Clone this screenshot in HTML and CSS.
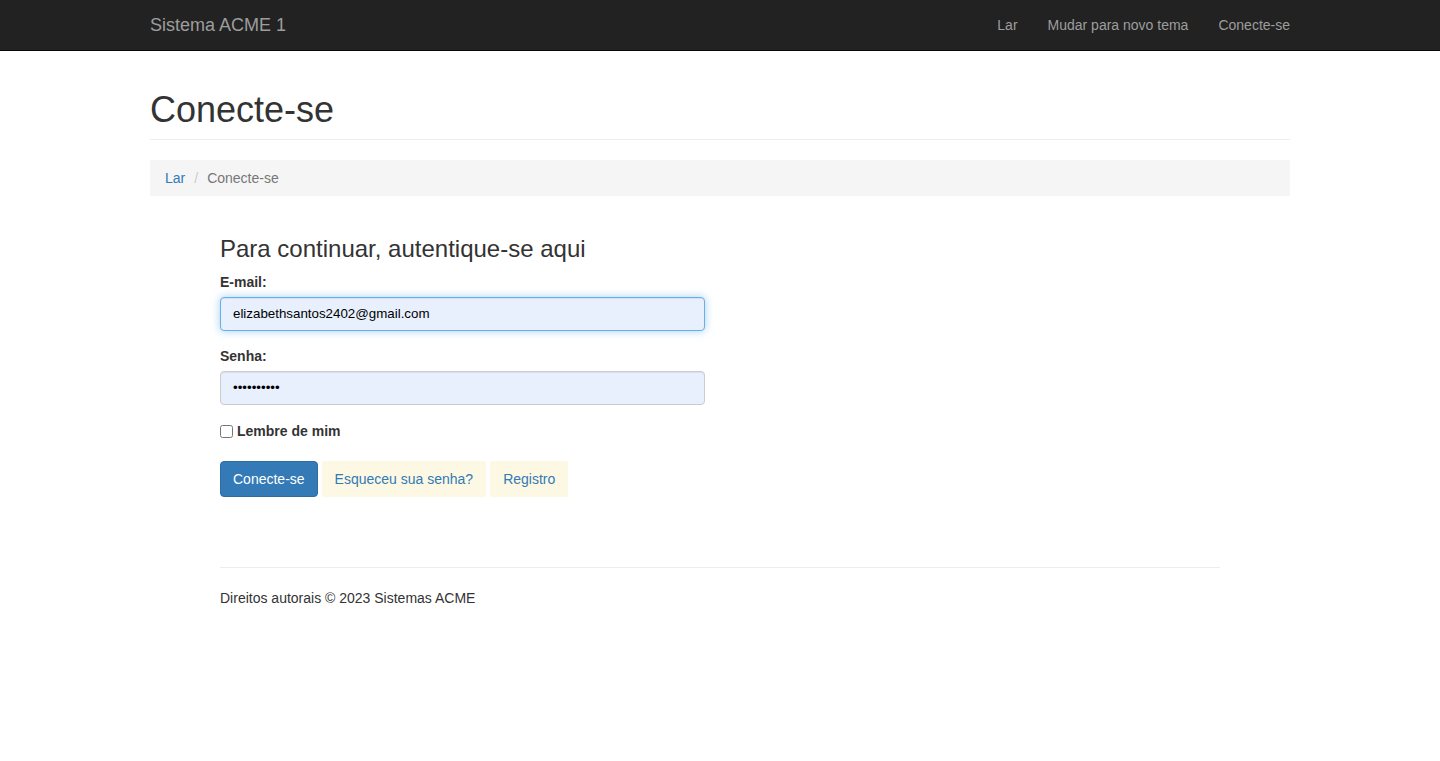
FILE: index.html
```html
<!DOCTYPE html>
<html lang="pt">
<head>
<meta charset="utf-8">
<title>Conecte-se - Sistema ACME 1</title>
<link rel="stylesheet" href="styles.css">
</head>
<body>
<nav class="navbar">
  <div class="container navbar-inner">
    <a class="brand" href="#">Sistema ACME 1</a>
    <ul class="nav">
      <li><a href="#">Lar</a></li>
      <li><a href="#">Mudar para novo tema</a></li>
      <li><a href="#">Conecte-se</a></li>
    </ul>
  </div>
</nav>

<div class="container">
  <h1 class="page-header">Conecte-se</h1>
  <ol class="breadcrumb">
    <li><a href="#">Lar</a></li>
    <li class="sep">/</li>
    <li class="active">Conecte-se</li>
  </ol>

  <main class="content">
    <section class="login">
      <h3 class="login-title">Para continuar, autentique-se aqui</h3>
      <form class="login-form">
        <div class="form-group">
          <label class="control-label" for="email">E-mail:</label>
          <input class="form-control focused" id="email" type="text" value="elizabethsantos2402@gmail.com">
        </div>
        <div class="form-group">
          <label class="control-label" for="senha">Senha:</label>
          <input class="form-control" id="senha" type="password" value="1234567890">
        </div>
        <div class="checkbox">
          <label><input type="checkbox"> Lembre de mim</label>
        </div>
        <div class="actions">
          <button type="button" class="btn btn-primary">Conecte-se</button>
          <a class="btn btn-soft" href="#">Esqueceu sua senha?</a>
          <a class="btn btn-soft" href="#">Registro</a>
        </div>
      </form>
    </section>

    <footer class="footer">
      <p>Direitos autorais © 2023 Sistemas ACME</p>
    </footer>
  </main>
</div>
</body>
</html>
```

FILE: styles.css
```css
* { box-sizing: border-box; }

html, body {
  margin: 0;
  padding: 0;
}

body {
  font-family: "Liberation Sans", Arial, Helvetica, sans-serif;
  font-size: 14px;
  line-height: 1.42857143;
  color: #333;
  background: #fff;
}

a { color: #337ab7; text-decoration: none; }

.container {
  width: 1170px;
  margin: 0 auto;
  padding: 0 15px;
}

/* Navbar */
.navbar {
  height: 51px;
  background: #222;
  border-bottom: 1px solid #080808;
}

.navbar-inner {
  display: flex;
  justify-content: space-between;
  align-items: flex-start;
}

.brand {
  display: block;
  padding: 15px 0;
  font-size: 18px;
  line-height: 20px;
  color: #9d9d9d;
}

.nav {
  display: flex;
  list-style: none;
  margin: 0 -15px 0 0;
  padding: 0;
}

.nav a {
  display: block;
  padding: 15px;
  line-height: 20px;
  color: #9d9d9d;
}

/* Page header */
.page-header {
  margin: 39px 0 20px;
  padding-bottom: 9px;
  border-bottom: 1px solid #eee;
  font-size: 36px;
  font-weight: 500;
  line-height: 1.1;
  color: #333;
}

/* Breadcrumb */
.breadcrumb {
  display: flex;
  list-style: none;
  margin: 0 0 20px;
  padding: 8px 15px;
  background: #f5f5f5;
  border-radius: 0;
}

.breadcrumb .sep {
  padding: 0 9px;
  color: #ccc;
}

.breadcrumb .active { color: #777; }

/* Content */
.content {
  padding: 0 70px;
}

.login {
  width: 485px;
  padding-top: 20px;
}

.login-title {
  margin: 0 0 10px;
  font-size: 24px;
  font-weight: 500;
  line-height: 1.1;
}

.form-group {
  margin-bottom: 15px;
}

.control-label {
  display: block;
  margin-bottom: 5px;
  font-weight: bold;
}

.form-control {
  display: block;
  width: 100%;
  height: 34px;
  padding: 6px 12px;
  font-family: "Liberation Sans", Arial, sans-serif;
  font-size: 13.333px;
  line-height: 20px;
  color: #000;
  background: #e8f0fe;
  border: 1px solid #ccc;
  border-radius: 4px;
  box-shadow: inset 0 1px 1px rgba(0,0,0,.075);
  outline: none;
}

.form-control.focused {
  border-color: #66afe9;
  box-shadow: inset 0 1px 1px rgba(0,0,0,.075), 0 0 8px rgba(102,175,233,.6);
}

.checkbox {
  margin: 0 0 20px;
  padding-top: 1px;
}

.checkbox label {
  display: flex;
  align-items: center;
  gap: 4px;
  font-weight: bold;
  line-height: 20px;
}

.checkbox input {
  width: 13px;
  height: 13px;
  margin: 1px 0 0;
}

.actions {
  display: flex;
  gap: 4px;
}

.btn {
  display: inline-block;
  padding: 7px 12px;
  font-family: "Liberation Sans", Arial, sans-serif;
  font-size: 14px;
  line-height: 20px;
  border: 1px solid transparent;
  border-radius: 4px;
  cursor: pointer;
}

.btn-primary {
  color: #fff;
  background: #337ab7;
  border-color: #2e6da4;
}

.btn-soft {
  color: #337ab7;
  background: #fcf8e3;
  border-color: #fcf8e3;
  border-radius: 2px;
}

/* Footer */
.footer {
  margin-top: 70px;
  border-top: 1px solid #eee;
  padding-top: 20px;
}

.footer p {
  margin: 0;
  line-height: 20px;
}
```
